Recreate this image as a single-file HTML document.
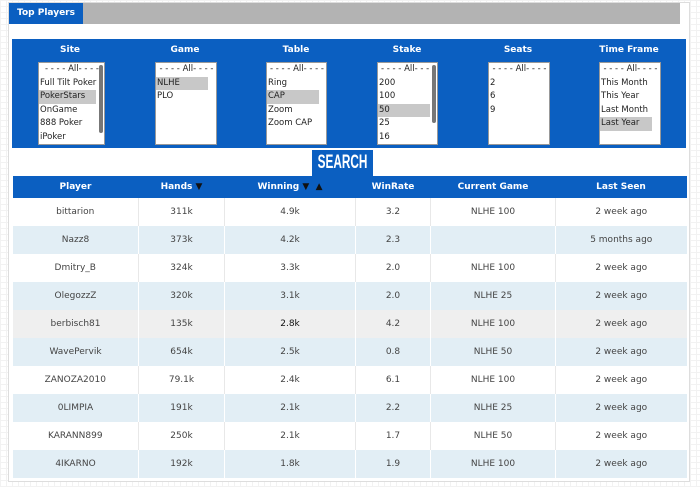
<!DOCTYPE html><html><head><style>
*{margin:0;padding:0;box-sizing:border-box}
body{width:700px;height:487px;background:#fff;font-family:"DejaVu Sans","Liberation Sans",sans-serif;font-size:9px;color:#333;position:relative;overflow:hidden;
background-image:linear-gradient(#f2f2f2 1px,transparent 1px),linear-gradient(90deg,#f2f2f2 1px,transparent 1px);background-size:6px 6px}
.panel{position:absolute;left:8px;top:2px;width:682px;height:480px;background:#fff;border:1px solid #ddd}
.bar{position:absolute;left:9px;top:3px;width:671px;height:21px;background:#b3b3b3}
.tab{position:absolute;left:9px;top:3px;width:74px;height:21px;background:#0b5fc1;color:#fff;font-weight:bold;font-size:9px;line-height:21px;text-align:center}
.filt{position:absolute;left:12px;top:39px;width:674px;height:109px;background:#0b5fc1}
.lbl{position:absolute;top:6px;color:#fff;font-weight:bold;font-size:9px;text-align:center;width:80px}
.box{position:absolute;top:23px;height:83px;background:#fff;border:1px solid #999;font-size:8.5px;line-height:13.5px;color:#222;overflow:hidden}
.box div{padding-left:1px;width:52px}
.box .s{background:#c8c8c8}
.box .a{text-align:center;width:auto}
.box .sb{position:absolute;right:1px;top:2px;width:4px;padding:0;background:#777;border-radius:2px}
.search{position:absolute;left:312px;top:150px;width:61px;height:26px;background:#0b5fc1;color:#fff;overflow:hidden}
.search span{display:block;font-family:"Liberation Sans",sans-serif;font-weight:bold;font-size:19px;line-height:26px;text-align:center;transform:scaleX(0.62);white-space:nowrap;margin-left:-20px;width:101px}
table{position:absolute;left:12px;top:176px;width:674px;border-collapse:collapse;table-layout:fixed}
th{background:#0b5fc1;color:#fff;height:22px;font-size:9px;font-weight:bold}
td{height:28px;text-align:center;border-left:1px solid #e8e8e8;font-size:9px;color:#444;background:#fff}
tr:nth-child(odd) td{background:#e2eef5;border-left:1px solid #fff}
tr.g td{background:#efefef;border-left:1px solid #fff}
td:first-child{border-left:none}
</style></head><body>
<div class="panel"></div>
<div class="bar"></div><div class="tab">Top Players</div>
<div class="filt">
<div class="lbl" style="left:18px">Site</div>
<div class="lbl" style="left:133px">Game</div>
<div class="lbl" style="left:244px">Table</div>
<div class="lbl" style="left:355px">Stake</div>
<div class="lbl" style="left:466px">Seats</div>
<div class="lbl" style="left:577px">Time Frame</div>
<div class="box" style="left:26px;width:67px"><div class="a">- - - - All- - - -</div><div style="width:auto">Full Tilt Poker</div><div class="s" style="width:57px">PokerStars</div><div>OnGame</div><div>888 Poker</div><div>iPoker</div><div class="sb" style="height:68px"></div></div>
<div class="box" style="left:143px;width:62px"><div class="a">- - - - All- - - -</div><div class="s">NLHE</div><div>PLO</div></div>
<div class="box" style="left:254px;width:61px"><div class="a">- - - - All- - - -</div><div>Ring</div><div class="s">CAP</div><div>Zoom</div><div>Zoom CAP</div></div>
<div class="box" style="left:365px;width:61px"><div class="a">- - - - All- - - -</div><div>200</div><div>100</div><div class="s">50</div><div>25</div><div>16</div><div class="sb" style="height:58px"></div></div>
<div class="box" style="left:476px;width:62px"><div class="a">- - - - All- - - -</div><div>2</div><div>6</div><div>9</div></div>
<div class="box" style="left:587px;width:62px"><div class="a">- - - - All- - - -</div><div style="width:auto">This Month</div><div>This Year</div><div>Last Month</div><div class="s">Last Year</div></div>
</div>
<div class="search"><span>SEARCH</span></div>
<table>
<colgroup><col style="width:126px"><col style="width:86px"><col style="width:131px"><col style="width:75px"><col style="width:125px"><col style="width:131px"></colgroup>
<tr><th>Player</th><th>Hands <span style="color:#111">▼</span></th><th>Winning <span style="color:#111">▼</span> &nbsp;<span style="color:#111">▲</span></th><th>WinRate</th><th>Current Game</th><th>Last Seen</th></tr>
<tr><td>bittarion</td><td>311k</td><td>4.9k</td><td>3.2</td><td>NLHE 100</td><td>2 week ago</td></tr>
<tr><td>Nazz8</td><td>373k</td><td>4.2k</td><td>2.3</td><td></td><td>5 months ago</td></tr>
<tr><td>Dmitry_B</td><td>324k</td><td>3.3k</td><td>2.0</td><td>NLHE 100</td><td>2 week ago</td></tr>
<tr><td>OlegozzZ</td><td>320k</td><td>3.1k</td><td>2.0</td><td>NLHE 25</td><td>2 week ago</td></tr>
<tr class="g"><td>berbisch81</td><td>135k</td><td style="color:#111">2.8k</td><td>4.2</td><td>NLHE 100</td><td>2 week ago</td></tr>
<tr><td>WavePervik</td><td>654k</td><td>2.5k</td><td>0.8</td><td>NLHE 50</td><td>2 week ago</td></tr>
<tr><td>ZANOZA2010</td><td>79.1k</td><td>2.4k</td><td>6.1</td><td>NLHE 100</td><td>2 week ago</td></tr>
<tr><td>0LIMPIA</td><td>191k</td><td>2.1k</td><td>2.2</td><td>NLHE 25</td><td>2 week ago</td></tr>
<tr><td>KARANN899</td><td>250k</td><td>2.1k</td><td>1.7</td><td>NLHE 50</td><td>2 week ago</td></tr>
<tr><td>4IKARNO</td><td>192k</td><td>1.8k</td><td>1.9</td><td>NLHE 100</td><td>2 week ago</td></tr>
</table>
</body></html>
